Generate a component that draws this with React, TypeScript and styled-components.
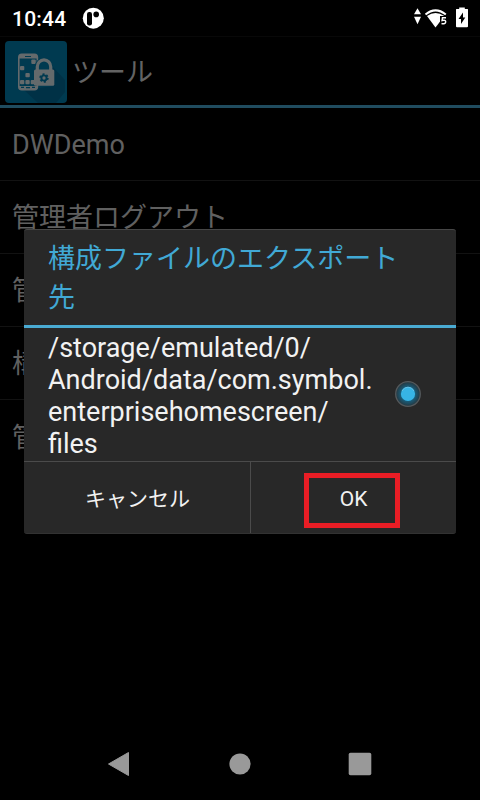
import React from "react";
import styled, { createGlobalStyle } from "styled-components";

const GlobalStyle = createGlobalStyle`
  * { box-sizing: border-box; }
  body { margin: 0; background: #000; }
`;

const Screen = styled.div`
  position: relative;
  display: flex;
  flex-direction: column;
  width: 480px;
  height: 800px;
  overflow: hidden;
  background: #000;
  font-family: Roboto, "Noto Sans CJK JP", sans-serif;
`;

const StatusBar = styled.header`
  display: flex;
  align-items: center;
  height: 36px;
  padding: 0 11px 0 12px;
  color: #fff;
`;

const Clock = styled.span`
  width: 70px;
  font-size: 21px;
  font-weight: 500;
  line-height: 36px;
  padding-top: 2px;
  letter-spacing: 0.2px;
`;

const StatusIcons = styled.div`
  display: flex;
  margin-left: auto;
`;

const TitleBar = styled.div`
  display: flex;
  align-items: center;
  gap: 5px;
  height: 72px;
  padding: 2px 0 0 5px;
  border-top: 1px solid #080808;
  border-bottom: 3px solid #204c5f;
`;

const ScreenTitle = styled.h1`
  margin: 0;
  padding-top: 2px;
  font-size: 27px;
  font-weight: 400;
  line-height: 39px;
  color: #636363;
`;

const Menu = styled.ul`
  flex: 1;
  margin: 0;
  padding: 0;
  list-style: none;
`;

const MenuItem = styled.li`
  display: flex;
  align-items: center;
  height: 73px;
  padding: 3px 0 0 12px;
  border-bottom: 1px solid #121212;
  font-size: 27px;
  line-height: 39px;
  color: #606060;

  &:last-child { border-bottom: 0; }
`;

const Dialog = styled.section`
  position: absolute;
  top: 229px;
  left: 24px;
  display: flex;
  flex-direction: column;
  width: 432px;
  height: 305px;
  border-top: 1px solid #464646;
  border-bottom: 1px solid #323232;
  border-radius: 3px;
  background: #282828;
  overflow: hidden;
`;

const DialogTitle = styled.h2`
  height: 98px;
  margin: 0;
  padding: 10px 24px 0;
  border-bottom: 3px solid #4aabd3;
  font-size: 27px;
  font-weight: 400;
  line-height: 39px;
  color: #41a9d5;
`;

const Choice = styled.div`
  display: flex;
  align-items: flex-start;
  justify-content: space-between;
  height: 133px;
  padding: 4px 34px 0 24px;
`;

const Path = styled.span`
  font-size: 27px;
  line-height: 32px;
  color: #f2f2f2;
  white-space: nowrap;
`;

const RadioSlot = styled.span`
  display: flex;
  padding-top: 48px;
`;

const ButtonBar = styled.div`
  display: grid;
  grid-template-columns: 227px 1fr;
  flex: 1;
  border-top: 1px solid #4b4b4b;
`;

const Button = styled.button<{ $divided?: boolean }>`
  display: flex;
  align-items: center;
  justify-content: center;
  padding: 3px 0 0 ${(p) => (p.$divided ? "1px" : "0")};
  border: 0;
  border-right: ${(p) => (p.$divided ? "1px solid #4b4b4b" : "0")};
  background: transparent;
  font: 400 21px/30px Roboto, "Noto Sans CJK JP", sans-serif;
  color: #f2f2f2;
`;

const Highlight = styled.div`
  position: absolute;
  top: 473px;
  left: 304px;
  width: 96px;
  height: 55px;
  border: 5px solid #e91d25;
  pointer-events: none;
`;

const NavBar = styled.nav`
  display: flex;
  align-items: center;
  justify-content: center;
  gap: 72px;
  height: 72px;
`;

const AppBadge = () => (
  <svg width="22" height="22" viewBox="0 0 22 22">
    <circle cx="11.3" cy="11.2" r="10.5" fill="#fff" />
    <rect x="5" y="5" width="5" height="13.4" rx="2.2" />
    <circle cx="14.2" cy="7.4" r="2.8" />
  </svg>
);

const FIVE = "M446 17.700H442.500L442.100 20.500Q445.700 19.500 445.700 21.900Q445.300 24.500 441.500 23.500";

const Signals = () => (
  <svg width="56" height="24" viewBox="413 6 56 24" fill="#fff">
    <path d="M417.500 8.200 421 14.200H414zM417.500 24.200 414 16.700h7z" />
    <path d="M425.500 14.500Q435.500 6.300 445.800 14.500" fill="none" stroke="#fff" strokeWidth="2" />
    <path d="M427 16Q435.500 10 444.300 16L435.500 27.400z" />
    <path d="M440 16H448V26H440z" fill="#000" />
    <path d={FIVE} fill="none" stroke="#fff" strokeWidth="1.500" />
    <path d="M456.500 9H459.200V7.500h5.600v1.500h2.700q.5 0 .5.500V26.200q0 1-1 1H457q-1 0-1-1V9.500q0-.5.500-.5z" />
    <path d="M463 12.500 458.500 19h2.500V24l4.300-6.500h-2.300z" fill="#000" />
  </svg>
);

const ToolIcon = () => (
  <svg width="62" height="62" viewBox="0 0 62 62">
    <rect width="62" height="62" rx="4" fill="#003a50" />
    <path d="M48 26 60 39V51L51 62H33L19 49l30-4z" fill="#003146" />
    <rect x="13.800" y="13.200" width="18.600" height="35.500" rx="3" fill="#003a50" stroke="#646a6c" strokeWidth="1.600" />
    <path d="M14 14h18v3.500H14zM14 45h18v3.200H14z" fill="#646a6c" />
    <path d="M20 15.500h6M16 46.300h3M21 46.700h4M27 46.300h3" stroke="#003a50" strokeWidth="1.200" />
    <g fill="#646a6c">
      <rect x="26.300" y="18.400" width="4.500" height="4.500" rx="1" />
      <rect x="15" y="25" width="4.300" height="4.300" rx="1" />
      <rect x="20.400" y="31.900" width="4.400" height="4.400" rx="1" />
      <rect x="15" y="39" width="4.300" height="4.300" rx="1" />
      <rect x="20.400" y="39" width="4.300" height="4.300" rx="1" />
      <rect x="25.700" y="39" width="4.300" height="4.300" rx="1" />
    </g>
    <path d="M32.300 30v-4.200a6.700 6.900 0 0 1 13.400 0V30z" fill="#003a50" stroke="#003a50" strokeWidth="5" />
    <path d="M32.300 30v-4.200a6.700 6.900 0 0 1 13.400 0V30" fill="none" stroke="#646a6c" strokeWidth="3.200" />
    <rect x="29" y="28.500" width="20.300" height="16.300" rx="1.500" fill="#646a6c" />
    <circle cx="39" cy="37" r="3.900" fill="none" stroke="#003a50" strokeWidth="1.600" strokeDasharray="2.042 2.042" />
    <circle cx="39" cy="37" r="2.600" fill="none" stroke="#003a50" strokeWidth="1.900" />
  </svg>
);

const Radio = () => (
  <svg width="28" height="28" viewBox="0 0 28 28">
    <defs>
      <radialGradient id="glow">
        <stop offset="0.5" stopColor="#176484" />
        <stop offset="1" stopColor="#26363e" />
      </radialGradient>
    </defs>
    <circle cx="14" cy="14" r="12.300" fill="url(#glow)" stroke="#54595c" strokeWidth="1.300" />
    <circle cx="14" cy="14" r="7.100" fill="#37b4e5" />
    <path d="M8 11a6.600 6.600 0 0 1 12 0" fill="none" stroke="#67c3e7" strokeWidth="1" />
  </svg>
);

const BackIcon = () => (
  <svg width="48" height="48" viewBox="0 0 48 48">
    <path d="M12.500 24 32.500 12.500V35.500z" fill="#999" stroke="#999" strokeWidth="1" strokeLinejoin="round" />
  </svg>
);

const HomeIcon = () => (
  <svg width="48" height="48" viewBox="0 0 48 48">
    <circle cx="24" cy="24" r="10.600" fill="#999" />
  </svg>
);

const RecentsIcon = () => (
  <svg width="48" height="48" viewBox="0 0 48 48">
    <rect x="12.700" y="12.700" width="22.600" height="22.600" rx="1.800" fill="#999" />
  </svg>
);

const tools = ["DWDemo", "管理者ログアウト", "管", "構", "管"];
const pathLines = ["/storage/emulated/0/", "Android/data/com.symbol.", "enterprisehomescreen/", "files"];

export default function App() {
  return (
    <Screen>
      <GlobalStyle />
      <StatusBar>
        <Clock>10:44</Clock>
        <AppBadge />
        <StatusIcons>
          <Signals />
        </StatusIcons>
      </StatusBar>
      <TitleBar>
        <ToolIcon />
        <ScreenTitle>ツール</ScreenTitle>
      </TitleBar>
      <Menu>
        {tools.map((label, i) => (
          <MenuItem key={i}>{label}</MenuItem>
        ))}
      </Menu>
      <NavBar>
        <BackIcon />
        <HomeIcon />
        <RecentsIcon />
      </NavBar>
      <Dialog role="dialog">
        <DialogTitle>
          構成ファイルのエクスポート
          <br />先
        </DialogTitle>
        <Choice>
          <Path>
            {pathLines.map((line) => (
              <React.Fragment key={line}>
                {line}
                <br />
              </React.Fragment>
            ))}
          </Path>
          <RadioSlot>
            <Radio />
          </RadioSlot>
        </Choice>
        <ButtonBar>
          <Button $divided>キャンセル</Button>
          <Button>OK</Button>
        </ButtonBar>
      </Dialog>
      <Highlight />
    </Screen>
  );
}
